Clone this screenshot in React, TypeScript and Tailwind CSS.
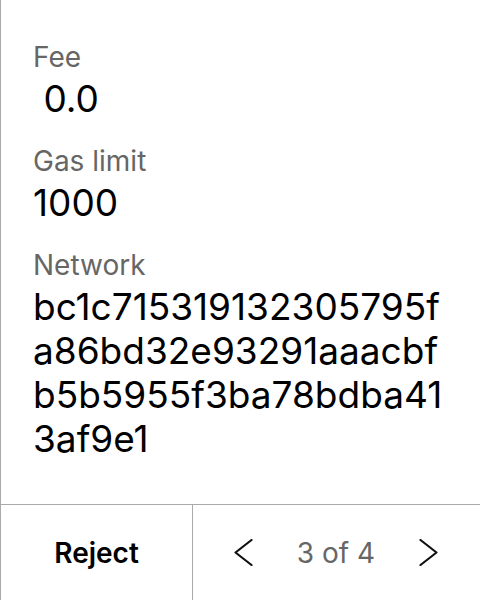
import React from "react";

function Chevron({ dir }: { dir: "left" | "right" }) {
  return (
    <svg width="19" height="27" viewBox="0 0 19 27" fill="none" className="block">
      {dir === "left" ? (
        <path d="M17.5 1 L1.5 13.5 L17.5 26" stroke="#111" strokeWidth="2.2" strokeLinecap="round" strokeLinejoin="round" />
      ) : (
        <path d="M1.5 1 L17.5 13.5 L1.5 26" stroke="#111" strokeWidth="2.2" strokeLinecap="round" strokeLinejoin="round" />
      )}
    </svg>
  );
}

function Field({ label, value }: { label: string; value: string }) {
  return (
    <div className="flex flex-col">
      <div className="text-[28px] leading-[34px] text-[#666]">{label}</div>
      <div className="mt-[3px] text-[37px] leading-[44px] text-black break-all whitespace-pre-wrap">{value}</div>
    </div>
  );
}

export default function App() {
  return (
    <div
      className="w-[480px] h-[600px] flex flex-col bg-white border-l border-[#aaa]"
      style={{ fontFamily: "Inter, 'Noto Sans', sans-serif" }}
    >
      <div className="flex-1 pt-[40px] pl-[32px] pr-[32px] flex flex-col gap-[23px]">
        <Field label="Fee" value=" 0.0" />
        <Field label="Gas limit" value="1000" />
        <Field label="Network" value="bc1c715319132305795fa86bd32e93291aaacbfb5b5955f3ba78bdba413af9e1" />
      </div>
      <div className="h-[96px] border-t border-[#aaa] flex">
        <div className="w-[192px] border-r border-[#aaa] flex items-center justify-center">
          <span className="text-[28px] font-semibold text-black">Reject</span>
        </div>
        <div className="flex-1 flex items-center justify-between pl-[41px] pr-[42px]">
          <Chevron dir="left" />
          <span className="text-[28px] text-[#666]">3 of 4</span>
          <Chevron dir="right" />
        </div>
      </div>
    </div>
  );
}
